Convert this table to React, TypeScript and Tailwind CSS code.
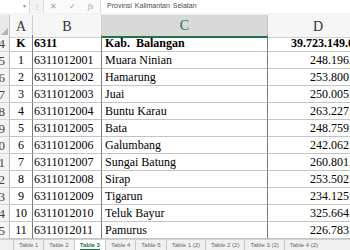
import React from "react";

type Row = {n: number; a: string; b: string; c: string; d: string; bold?: boolean};

const rows: Row[] = [
  {n: 4, a: "K", b: "6311", c: "Kab.  Balangan", d: "39.723.149.000", bold: true},
  {n: 5, a: "1", b: "6311012001", c: "Muara Ninian", d: "248.196.000"},
  {n: 6, a: "2", b: "6311012002", c: "Hamarung", d: "253.800.000"},
  {n: 7, a: "3", b: "6311012003", c: "Juai", d: "250.005.000"},
  {n: 8, a: "4", b: "6311012004", c: "Buntu Karau", d: "263.227.000"},
  {n: 9, a: "5", b: "6311012005", c: "Bata", d: "248.759.000"},
  {n: 10, a: "6", b: "6311012006", c: "Galumbang", d: "242.062.000"},
  {n: 11, a: "7", b: "6311012007", c: "Sungai Batung", d: "260.801.000"},
  {n: 12, a: "8", b: "6311012008", c: "Sirap", d: "253.502.000"},
  {n: 13, a: "9", b: "6311012009", c: "Tigarun", d: "234.125.000"},
  {n: 14, a: "10", b: "6311012010", c: "Teluk Bayur", d: "325.664.000"},
  {n: 15, a: "11", b: "6311012011", c: "Pamurus", d: "226.783.000"},
];

const tabs = ["Table 1", "Table 2", "Table 3", "Table 4", "Table 5", "Table 1 (2)", "Table 2 (2)", "Table 3 (2)", "Table 4 (2)"];

const serif = "font-['Liberation_Serif','Times_New_Roman',serif]";
const sans = "font-['Liberation_Sans',Arial,sans-serif]";

const FormulaBar = () => (
  <div className={`flex h-[13px] items-stretch bg-[#f3f3f3] text-[#9a9a9a] ${sans}`}>
    <div className="flex w-[30px] items-center justify-end border-r border-[#d6d6d6] bg-white pr-[3px] text-[6px]">
      ▾
    </div>
    <div className="flex w-[13px] items-center justify-center text-[8px] text-[#b0b0b0]">⋮</div>
    <div className="flex w-[58px] items-center border-x border-[#dcdcdc] bg-[#fafafa] text-[8px]">
      <span className="w-[19px] text-center">✕</span>
      <span className="w-[19px] text-center">✓</span>
      <span className={`w-[19px] text-center italic ${serif}`}>fx</span>
    </div>
    <div className="flex flex-1 items-center bg-white pl-[6px] text-[7px] text-[#4a4a4a] [word-spacing:1px]">
      Provinsi Kalimantan Selatan
    </div>
  </div>
);

const HeaderRow = () => (
  <div className={`grid h-[20px] grid-cols-[10px_23px_69px_166px_108px] text-[14px] text-[#333] ${serif}`}>
    <div className="flex items-end justify-end border-r border-b border-[#c6c6c6] bg-[#e9e9e9] pb-[2px] pr-[1px]">
      <svg width="7" height="7" viewBox="0 0 7 7">
        <polygon points="7,0 7,7 0,7" fill="#b4b4b4" />
      </svg>
    </div>
    <div className="flex items-center justify-center border-r border-b border-[#d0d0d0] bg-[#f6f6f6]">A</div>
    <div className="flex items-center justify-center border-r border-b border-[#d0d0d0] bg-[#f6f6f6]">B</div>
    <div className="flex items-center justify-center border-r border-b-2 border-r-[#c4c4c4] border-b-[#217346] bg-[#d9d9d9] text-[#217346]">
      C
    </div>
    <div className="flex items-center justify-center border-b border-[#d0d0d0] bg-[#f6f6f6] pr-[8px]">D</div>
  </div>
);

const DataRow = ({row}: {row: Row}) => (
  <div
    className={`grid h-[17px] grid-cols-[10px_23px_69px_166px_108px] text-[12px] leading-none text-black ${serif} ${
      row.bold ? "font-bold" : ""
    }`}
  >
    <div className="flex items-center justify-end overflow-hidden whitespace-nowrap border-r border-b border-r-[#b8b8b8] border-b-[#d4d4d4] bg-[#f3f3f3] pr-[4px] text-[13px] font-normal text-[#444]">
      {row.n}
    </div>
    <div className="flex items-center justify-center border-r border-b border-r-[#7c7c7c] border-b-[#c4c4c4]">{row.a}</div>
    <div className="flex items-center border-r border-b border-r-[#7c7c7c] border-b-[#c4c4c4] pl-[1px]">{row.b}</div>
    <div className="flex items-center whitespace-pre border-r border-b border-r-[#7c7c7c] border-b-[#c4c4c4] pl-[3px]">
      {row.c}
    </div>
    <div
      className={`flex items-center justify-end whitespace-nowrap border-b border-[#c4c4c4] ${
        row.bold ? "pr-[10px]" : "pr-[6px]"
      }`}
    >
      {row.d}
    </div>
  </div>
);

const TabBar = () => (
  <div className={`flex h-[11px] items-stretch border-t border-[#d0d0d0] bg-[#f0f0f0] pl-[13px] text-[6px] text-[#6a6a6a] ${sans}`}>
    {tabs.map((t) => {
      const active = t === "Table 3";
      return (
        <div
          key={t}
          className={`flex items-center whitespace-nowrap border-l border-[#c8c8c8] px-[5px] ${
            active ? "bg-white font-bold text-[#217346]" : ""
          }`}
        >
          <span className={active ? "border-b border-[#217346] leading-[8px]" : ""}>{t}</span>
        </div>
      );
    })}
  </div>
);

export default function App() {
  return (
    <div className="flex h-[250px] w-[350px] flex-col overflow-hidden bg-white">
      <FormulaBar />
      <div className="h-[2px] bg-[#f3f3f3]" />
      <div className="w-[376px]">
        <HeaderRow />
        {rows.map((r) => (
          <DataRow key={r.n} row={r} />
        ))}
      </div>
      <TabBar />
    </div>
  );
}
